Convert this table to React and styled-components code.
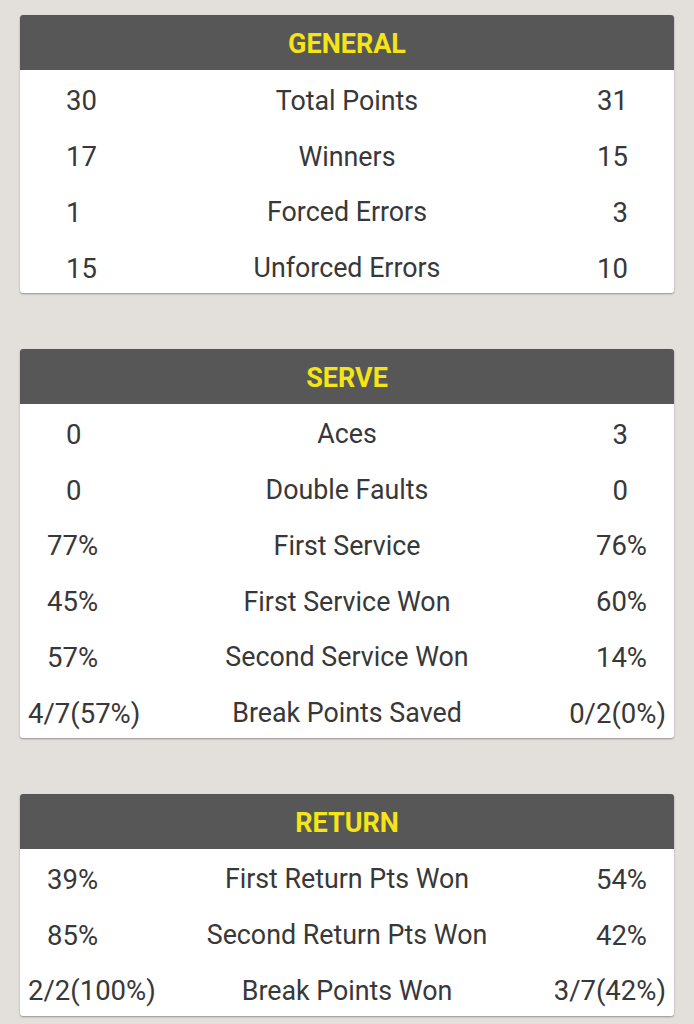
import React from 'react';
import styled, {createGlobalStyle} from 'styled-components';

const sections = [
	{
		title: 'GENERAL',
		rows: [
			['30', 'Total Points', '31'],
			['17', 'Winners', '15'],
			['1', 'Forced Errors', '3'],
			['15', 'Unforced Errors', '10'],
		],
	},
	{
		title: 'SERVE',
		rows: [
			['0', 'Aces', '3'],
			['0', 'Double Faults', '0'],
			['77%', 'First Service', '76%'],
			['45%', 'First Service Won', '60%'],
			['57%', 'Second Service Won', '14%'],
			['4/7(57%)', 'Break Points Saved', '0/2(0%)'],
		],
	},
	{
		title: 'RETURN',
		rows: [
			['39%', 'First Return Pts Won', '54%'],
			['85%', 'Second Return Pts Won', '42%'],
			['2/2(100%)', 'Break Points Won', '3/7(42%)'],
		],
	},
];

// values sit closer to the edge the longer they get
const insetFor = v => (v.includes('/') ? 8 : v.includes('%') ? 27 : 46);

const App = () => (
	<>
		<GlobalStyle />
		<StyledPage>
			{sections.map(s => (
				<StyledCard key={s.title}>
					<StyledHeader>{s.title}</StyledHeader>
					{s.rows.map(([l, label, r]) => (
						<StyledRow key={label}>
							<StyledValue $side='left' $inset={insetFor(l)}>
								{l}
							</StyledValue>
							<StyledLabel>{label}</StyledLabel>
							<StyledValue $side='right' $inset={insetFor(r)}>
								{r}
							</StyledValue>
						</StyledRow>
					))}
				</StyledCard>
			))}
		</StyledPage>
	</>
);

const GlobalStyle = createGlobalStyle`
	body {
		margin: 0;
		background: #e3dfda;
		font-family: Roboto, 'Liberation Sans', sans-serif;
	}
`;
const StyledPage = styled.div`
	display: flex;
	flex-direction: column;
	gap: 55.5px;
	padding: 15px 20px;
`;
const StyledCard = styled.div`
	background: #fff;
	border-radius: 3px;
	overflow: hidden;
	box-shadow: 0 1px 2px rgba(0, 0, 0, 0.35);
`;
const StyledHeader = styled.div`
	height: 55px;
	display: flex;
	align-items: center;
	justify-content: center;
	background: #575757;
	color: #f5e416;
	font-weight: 700;
	font-size: 27px;
	padding-top: 3px;
	box-sizing: border-box;
`;
const StyledRow = styled.div`
	height: 55.75px;
	display: grid;
	grid-template-columns: 1fr auto 1fr;
	align-items: center;
	color: #383838;
	padding-top: 6px;
	box-sizing: border-box;
`;
const StyledLabel = styled.div`
	font-size: 26.8px;
	text-align: center;
`;
const StyledValue = styled.div`
	font-size: 27.5px;
	text-align: ${p => p.$side};
	padding-${p => p.$side}: ${p => p.$inset}px;
`;

export default App;
